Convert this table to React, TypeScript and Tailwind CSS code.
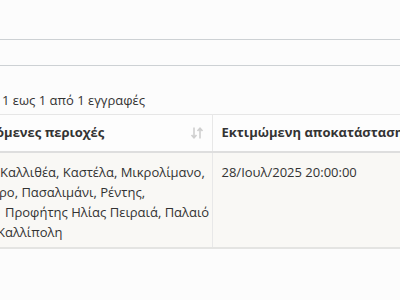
import React from 'react';

const areaLines = [
  { text: 'Καλλιθέα, Καστέλα, Μικρολίμανο,', indent: 'pl-[3px]' },
  { text: 'ρο, Πασαλιμάνι, Ρέντης,', indent: 'pl-[2px]' },
  { text: 'Προφήτης Ηλίας Πειραιά, Παλαιό', indent: 'pl-[8px]' },
  { text: 'Καλλίπολη', indent: 'pl-0' },
];

const SortIcon: React.FC = () => (
  <svg width="14" height="14" viewBox="0 0 14 14" fill="none" stroke="#cfcfcf" strokeWidth="1.6">
    <path d="M4 1.5v10M1.5 9l2.5 2.8L6.5 9" />
    <path d="M10 12.5v-10M7.5 5l2.5-2.8L12.5 5" />
  </svg>
);

export default function App() {
  return (
    <div
      className="w-[400px] h-[300px] overflow-hidden bg-[#fcfcfc] text-[#333] text-[13px]"
      style={{ fontFamily: '"Open Sans", "Liberation Sans", sans-serif' }}
    >
      {/* filter bar strip */}
      <div className="h-[39px]" />
      <div className="h-[27px] border-y border-[#cdd1d4]" />

      {/* paging info */}
      <div className="pt-[24px] pl-[2px] leading-[20px] h-[48px]">1 εως 1 από 1 εγγραφές</div>

      <div className="overflow-hidden">
        <table className="-ml-[3px] border-collapse table-fixed w-[600px]">
          <thead>
            <tr className="border-t border-[#e6e6e6] border-b-2 border-b-[#dedede] bg-[#fdfdfd]">
              <th className="w-[215px] h-[37px] p-0 text-left font-bold border-r border-[#e8e8e8]">
                <div className="flex items-center justify-between pr-[8px]">
                  <span className="-ml-[1px]">όμενες περιοχές</span>
                  <SortIcon />
                </div>
              </th>
              <th className="h-[37px] pl-[9px] text-left font-bold whitespace-nowrap">
                Εκτιμώμενη αποκατάσταση
              </th>
            </tr>
          </thead>
          <tbody>
            <tr className="bg-[#f9f8f5] border-b-2 border-[#e4e4e2]">
              <td className="align-top pt-[9px] pb-[4px] border-r border-[#e8e8e8] leading-[20.3px]">
                {areaLines.map((line) => (
                  <div key={line.text} className={`whitespace-nowrap ${line.indent}`}>
                    {line.text}
                  </div>
                ))}
              </td>
              <td className="align-top pt-[9px] pl-[9px] leading-[20px] whitespace-nowrap">
                28/Ιουλ/2025 20:00:00
              </td>
            </tr>
          </tbody>
        </table>
      </div>
    </div>
  );
}
